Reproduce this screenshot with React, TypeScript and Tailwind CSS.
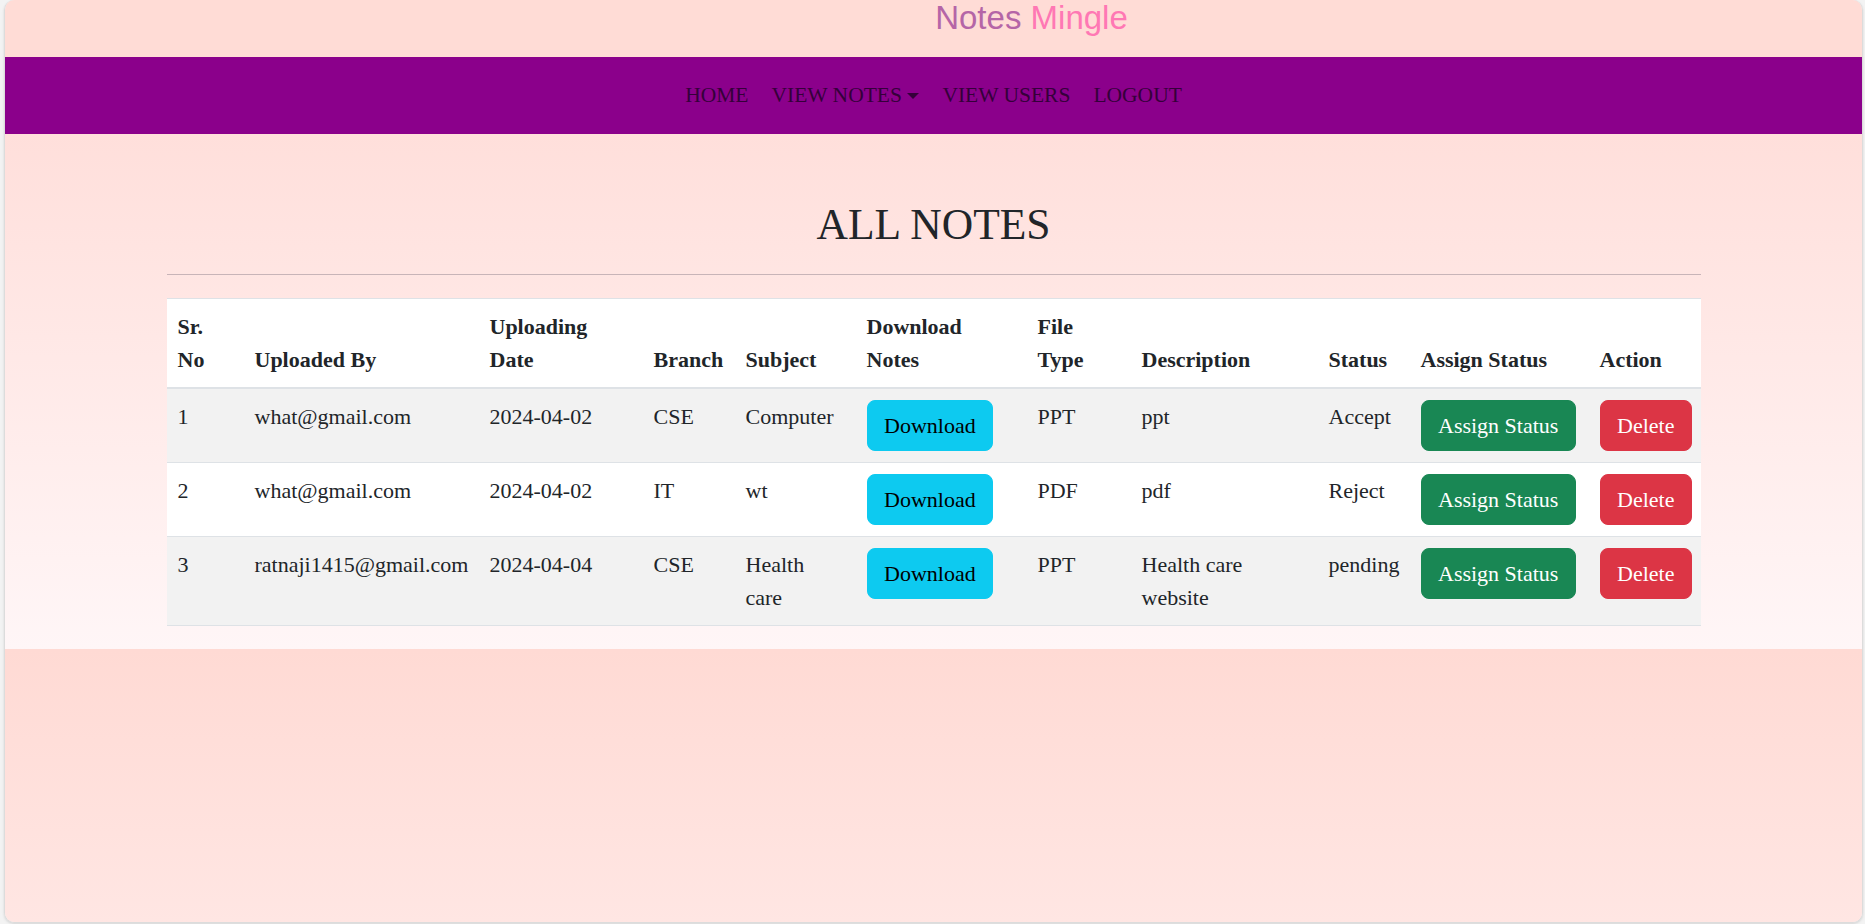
import React from "react";

const notes = [
  { id: 1, by: "what@gmail.com", date: "2024-04-02", branch: "CSE", subject: "Computer", type: "PPT", desc: "ppt", status: "Accept" },
  { id: 2, by: "what@gmail.com", date: "2024-04-02", branch: "IT", subject: "wt", type: "PDF", desc: "pdf", status: "Reject" },
  { id: 3, by: "ratnaji1415@gmail.com", date: "2024-04-04", branch: "CSE", subject: "Health\ncare", type: "PPT", desc: "Health care\nwebsite", status: "pending" },
];

const heads = ["Sr.\nNo", "Uploaded By", "Uploading\nDate", "Branch", "Subject", "Download\nNotes", "File\nType", "Description", "Status", "Assign Status", "Action"];

function NavLink({ label, caret }: { label: string; caret?: boolean }) {
  return (
    <a href="#" className="flex items-center px-[11.5px] text-[21.5px] leading-[33px] text-[#35003a]">
      {label}
      {caret && (
        <span className="ml-[5.5px] inline-block h-0 w-0 border-x-[6.5px] border-t-[6.5px] border-x-transparent border-t-[#35003a]" />
      )}
    </a>
  );
}

export default function App() {
  return (
    <div className="min-h-screen bg-[#f3f3f3] pl-[4px] pr-[2px] font-['Liberation_Serif',serif]">
      <div className="flex h-[923px] flex-col overflow-hidden rounded-[10px] border-x border-b border-[#dcdcdc] shadow-sm">
        {/* header */}
        <div className="flex h-[57px] justify-center bg-[#ffdcd6] pl-[196px] pt-[1px]">
          <h1 className="font-['Liberation_Sans',Arial,sans-serif] text-[33px] leading-[33px]">
            <span className="text-[#b565a7]">Notes</span> <span className="text-[#ff78b4]">Mingle</span>
          </h1>
        </div>

        {/* navbar */}
        <nav className="flex h-[77px] items-center justify-center bg-[#8b008b]">
          <NavLink label="HOME" />
          <NavLink label="VIEW NOTES" caret />
          <NavLink label="VIEW USERS" />
          <NavLink label="LOGOUT" />
        </nav>

        {/* content */}
        <section className="bg-linear-to-b from-[#ffdfdb] to-[#fff6f7] pb-[23px] pt-[64px]">
          <div className="mx-auto w-[1534px]">
            <h2 className="text-center text-[43.5px] leading-[1.2] text-[#212529]">ALL NOTES</h2>
            <hr className="mt-[24px] border-t border-[#c8b4b8]" />
            <table className="mt-[23px] w-[1534px] table-fixed border-collapse border-t border-[#dee2e6] bg-white text-[22px] leading-[33px] text-[#212529]">
              <colgroup>
                <col className="w-[77px]" />
                <col className="w-[235px]" />
                <col className="w-[164px]" />
                <col className="w-[92px]" />
                <col className="w-[121px]" />
                <col className="w-[171px]" />
                <col className="w-[104px]" />
                <col className="w-[187px]" />
                <col className="w-[92px]" />
                <col className="w-[179px]" />
                <col className="w-[112px]" />
              </colgroup>
              <thead>
                <tr className="border-b-2 border-[#dee2e6]">
                  {heads.map((h) => (
                    <th key={h} className="whitespace-pre-line p-[11px] text-left align-bottom font-bold">
                      {h}
                    </th>
                  ))}
                </tr>
              </thead>
              <tbody>
                {notes.map((n, i) => (
                  <tr key={n.id} className={`border-b border-[#dee2e6] ${i % 2 === 0 ? "bg-[#f2f2f2]" : "bg-white"}`}>
                    <td className="p-[11px] align-top">{n.id}</td>
                    <td className="whitespace-nowrap p-[11px] align-top">{n.by}</td>
                    <td className="p-[11px] align-top">{n.date}</td>
                    <td className="p-[11px] align-top">{n.branch}</td>
                    <td className="whitespace-pre-line p-[11px] align-top">{n.subject}</td>
                    <td className="p-[11px] align-top">
                      <button className="whitespace-nowrap rounded-[8px] border border-[#0dcaf0] bg-[#0dcaf0] px-[16.5px] py-[8px] text-black">
                        Download
                      </button>
                    </td>
                    <td className="p-[11px] align-top">{n.type}</td>
                    <td className="whitespace-pre-line p-[11px] align-top">{n.desc}</td>
                    <td className="p-[11px] align-top">{n.status}</td>
                    <td className="p-[11px] align-top">
                      <button className="whitespace-nowrap rounded-[8px] border border-[#198754] bg-[#198754] px-[16.5px] py-[8px] text-white">
                        Assign Status
                      </button>
                    </td>
                    <td className="p-[11px] align-top">
                      <button className="whitespace-nowrap rounded-[8px] border border-[#dc3545] bg-[#dc3545] px-[16.5px] py-[8px] text-white">
                        Delete
                      </button>
                    </td>
                  </tr>
                ))}
              </tbody>
            </table>
          </div>
        </section>

        <div className="flex-1 bg-linear-to-b from-[#ffdad4] to-[#ffe6e3]" />
      </div>
    </div>
  );
}
